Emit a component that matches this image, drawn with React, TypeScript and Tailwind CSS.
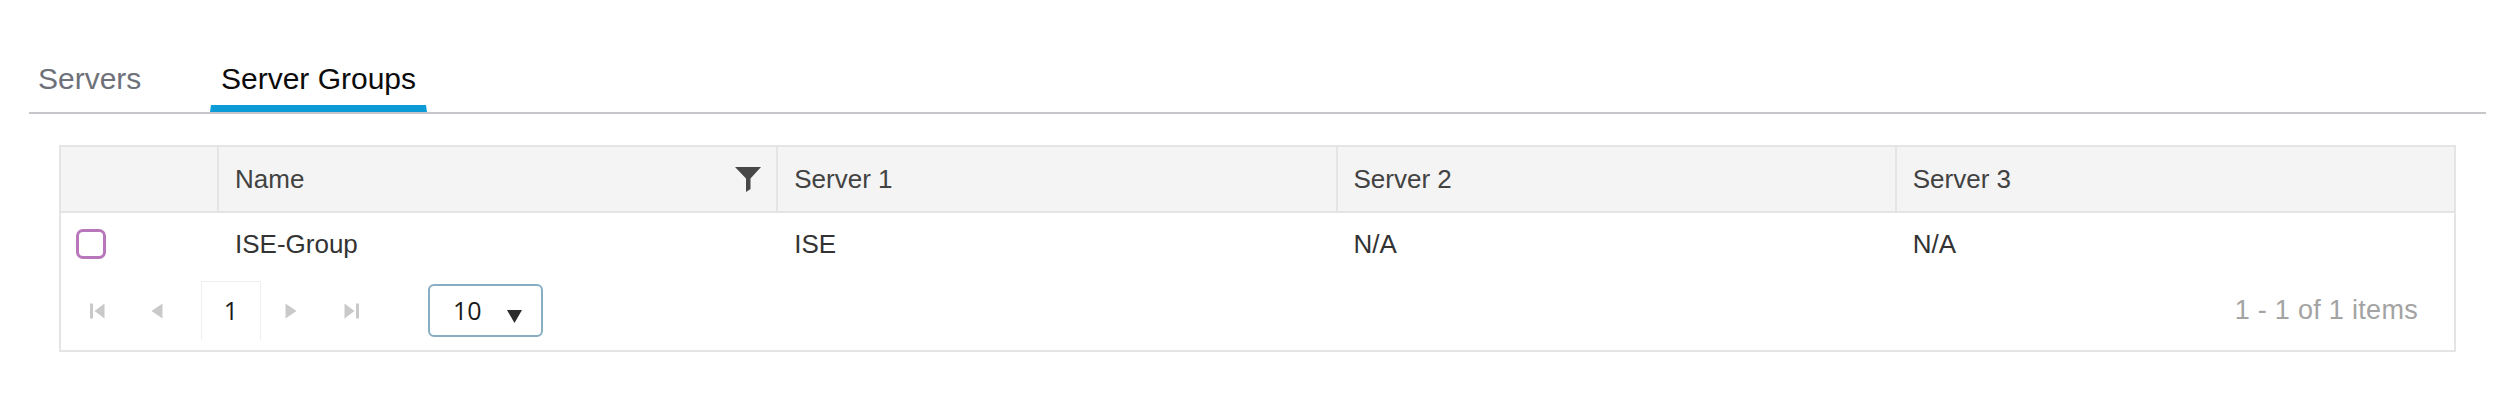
import React from "react";

interface GroupRow {
  name: string;
  server1: string;
  server2: string;
  server3: string;
}

const columns = ["Name", "Server 1", "Server 2", "Server 3"];

const rows: GroupRow[] = [
  { name: "ISE-Group", server1: "ISE", server2: "N/A", server3: "N/A" },
];

function FilterIcon() {
  return (
    <svg width="26" height="25" viewBox="0 0 26 25" className="shrink-0">
      <path d="M0 0H26L15.5 11.5V22L11 25V11.5Z" fill="#474747" />
    </svg>
  );
}

function FirstIcon() {
  return (
    <svg width="15" height="16" viewBox="0 0 15 16">
      <rect x="0" y="0.5" width="3" height="15" fill="#c9c9c9" />
      <path d="M14.5 0.5L4.5 8L14.5 15.5Z" fill="#c9c9c9" />
    </svg>
  );
}

function PrevIcon() {
  return (
    <svg width="12" height="16" viewBox="0 0 12 16">
      <path d="M11.5 0.5L0.5 8L11.5 15.5Z" fill="#c9c9c9" />
    </svg>
  );
}

function NextIcon() {
  return (
    <svg width="12" height="16" viewBox="0 0 12 16">
      <path d="M0.5 0.5L11.5 8L0.5 15.5Z" fill="#c9c9c9" />
    </svg>
  );
}

function LastIcon() {
  return (
    <svg width="15" height="16" viewBox="0 0 15 16">
      <path d="M0.5 0.5L10.5 8L0.5 15.5Z" fill="#c9c9c9" />
      <rect x="12" y="0.5" width="3" height="15" fill="#c9c9c9" />
    </svg>
  );
}

export default function App() {
  return (
    <div className="h-[402px] w-full bg-white font-['Liberation_Sans',Arial,sans-serif] overflow-hidden">
      {/* Tabs */}
      <div className="ml-[29px] mr-[28px] mt-[61px] flex border-b-2 border-[#c6c7ca]">
        <div className="flex w-[181px] flex-col pl-[9px]">
          <span className="text-[30px] leading-[36px] text-[#6e717a]">Servers</span>
          <div className="mt-[8px] h-[7px]" />
        </div>
        <div className="flex w-[217px] flex-col">
          <span className="text-center text-[30px] leading-[36px] text-[#0b0b0b]">Server Groups</span>
          <div className="mt-[8px] h-[7px] bg-[#0d9bd8] [clip-path:polygon(1px_0,calc(100%-1px)_0,100%_100%,0_100%)]" />
        </div>
      </div>

      {/* Table */}
      <div className="ml-[59px] mt-[31px] w-[2397px] border-2 border-[#e4e4e4]">
        <div className="grid h-[66px] grid-cols-[156px_1fr_1fr_1fr_1fr] border-b-2 border-[#e4e4e4] bg-[#f4f4f4]">
          <div />
          {columns.map((col) => (
            <div
              key={col}
              className="flex items-center justify-between border-l-2 border-[#e4e4e4] pl-[16px] pr-[15px] text-[26px] text-[#424242]"
            >
              <span>{col}</span>
              {col === "Name" && <FilterIcon />}
            </div>
          ))}
        </div>

        {rows.map((row) => (
          <div key={row.name} className="grid h-[62px] grid-cols-[156px_1fr_1fr_1fr_1fr] text-[26px] text-[#333]">
            <div className="flex items-center pl-[15px]">
              <div className="h-[30px] w-[30px] rounded-[7px] border-[3px] border-[#b777ba]" />
            </div>
            <div className="flex items-center pl-[18px]">{row.name}</div>
            <div className="flex items-center pl-[18px]">{row.server1}</div>
            <div className="flex items-center pl-[18px]">{row.server2}</div>
            <div className="flex items-center pl-[18px]">{row.server3}</div>
          </div>
        ))}

        {/* Pager */}
        <div className="flex h-[75px] items-center pb-[4px] pl-[6px] pr-[36px]">
          <div className="flex w-[60px] justify-center"><FirstIcon /></div>
          <div className="flex w-[60px] justify-center"><PrevIcon /></div>
          <div className="ml-[14px] flex h-[59px] w-[60px] items-center justify-center border-x border-t border-[#efefef] font-['Open_Sans',sans-serif] text-[25px] text-[#1a1a1a]">
            1
          </div>
          <div className="flex w-[60px] justify-center"><NextIcon /></div>
          <div className="flex w-[60px] justify-center"><LastIcon /></div>
          <div className="ml-[47px] flex h-[53px] w-[115px] items-center rounded-[6px] border-2 border-[#87aec2] pl-[23px]">
            <span className="font-['Open_Sans',sans-serif] text-[25px] text-[#1a1a1a]">10</span>
            <svg width="15" height="13" viewBox="0 0 15 13" className="ml-[25px] mt-[12px]">
              <path d="M0 0H15L7.5 13Z" fill="#2b2b2b" />
            </svg>
          </div>
          <span className="ml-auto text-[27px] tracking-[0.3px] text-[#a3a3a3]">1 - 1 of 1 items</span>
        </div>
      </div>
    </div>
  );
}
